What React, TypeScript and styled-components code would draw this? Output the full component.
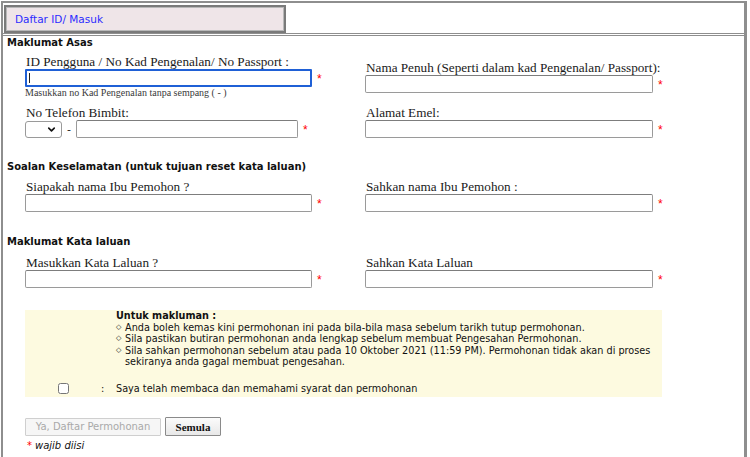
import React from 'react'
import styled, { createGlobalStyle, css } from 'styled-components'
import { ChevronDown } from 'lucide-react'

const GlobalStyle = createGlobalStyle`
  html, body {
    margin: 0;
    padding: 0;
    background: #ffffff;
  }
  body {
    font-family: 'Liberation Serif', 'Times New Roman', serif;
    color: #1a1a1a;
    overflow: hidden;
  }
`

const Frame = styled.div`
  width: 741px;
  margin-top: 1px;
  margin-left: 1px;
  border-top: 2px solid #8e8e8e;
  border-left: 2px solid #8e8e8e;
  border-right: 3px solid #8e8e8e;
  min-height: 470px;
`

const TabBar = styled.div`
  display: flex;
  padding: 2px 0 0 1px;
  border-bottom: 3px double #8e8e8e;
  height: 28px;
`

const Tab = styled.div`
  width: 269px;
  height: 24px;
  background: #efe5e8;
  border: 2px solid #7a7a7a;
  box-shadow: inset 0 0 0 1px #b8b8b8;
  display: flex;
  align-items: center;
  padding-left: 9px;
  font-family: 'DejaVu Sans', Verdana, sans-serif;
  font-size: 10.5px;
  color: #2b2bff;
`

const Content = styled.div`
  padding: 1px 0 0 4px;
`

const SectionTitle = styled.div<{ $top: number }>`
  margin-top: ${p => p.$top}px;
  font-family: 'DejaVu Sans', Verdana, sans-serif;
  font-weight: bold;
  font-size: 10px;
  line-height: 12px;
  height: 12px;
  color: #111;
`

const FieldGrid = styled.div<{ $top: number }>`
  display: grid;
  grid-template-columns: 340px 340px;
  align-items: center;
  row-gap: 6px;
  margin-top: ${p => p.$top}px;
  padding-left: 18px;
`

const Cell = styled.div`
  display: flex;
  flex-direction: column;
`

const Label = styled.label`
  font-size: 13.2px;
  line-height: 15px;
  padding-left: 1px;
  color: #1a1a1a;
  white-space: nowrap;
`

const InputRow = styled.div`
  display: flex;
  align-items: center;
`

const TextInput = styled.input<{ $width: number; $focused?: boolean }>`
  box-sizing: border-box;
  width: ${p => p.$width}px;
  height: 18px;
  margin: 0;
  padding: 0 3px;
  border: 1px solid #9a9a9a;
  border-top-color: #7d7d7d;
  border-radius: 2px;
  background: #fff;
  font-size: 13px;
  outline: none;
  ${p =>
    p.$focused &&
    css`
      border: 2px solid #1f60d6;
      border-radius: 1px;
    `}
`

const FocusWrap = styled.div`
  position: relative;
  display: flex;
`

const Caret = styled.span`
  position: absolute;
  left: 4px;
  top: 4px;
  width: 1px;
  height: 10px;
  background: #222;
`

const Required = styled.span`
  color: #f00;
  font-family: 'Liberation Sans', Arial, sans-serif;
  font-size: 12px;
  line-height: 12px;
  margin-left: 5px;
  padding-top: 2px;
`

const Hint = styled.div`
  font-size: 10px;
  line-height: 12px;
  color: #3a3a3a;
  white-space: nowrap;
`

const SelectWrap = styled.div`
  position: relative;
  display: flex;
`

const Select = styled.select`
  appearance: none;
  -webkit-appearance: none;
  box-sizing: border-box;
  width: 37px;
  height: 17px;
  margin: 0;
  border: 1px solid #9a9a9a;
  border-radius: 3px;
  background: #fff;
  font-size: 11px;
`

const SelectArrow = styled.span`
  position: absolute;
  right: 5px;
  top: 3px;
  display: flex;
  pointer-events: none;
  color: #111;
`

const Dash = styled.span`
  font-family: 'DejaVu Sans', Verdana, sans-serif;
  font-size: 11px;
  margin: 0 5px 0 5px;
`

const Notice = styled.div`
  margin: 22px 0 0 18px;
  width: 637px;
  height: 87px;
  background: #fdfae0;
  font-family: 'DejaVu Sans', Verdana, sans-serif;
  font-size: 9.7px;
  line-height: 11.5px;
  color: #111;
  display: flex;
  flex-direction: column;
`

const NoticeBody = styled.div`
  padding: 0 0 0 91px;
`

const NoticeTitle = styled.div`
  font-weight: bold;
`

const NoticeItem = styled.div`
  display: flex;
`

const Bullet = styled.span`
  width: 9px;
  flex: none;
  font-size: 7px;
`

const AgreeRow = styled.div`
  display: flex;
  align-items: center;
  margin-top: 15px;
`

const CheckCell = styled.div`
  width: 76px;
  display: flex;
  padding-left: 33px;
  box-sizing: border-box;
`

const CheckBox = styled.input`
  width: 11px;
  height: 11px;
  margin: 0;
`

const Colon = styled.span`
  width: 15px;
`

const Buttons = styled.div`
  display: flex;
  align-items: center;
  gap: 4px;
  margin: 20px 0 0 18px;
`

const Button = styled.button<{ $disabled?: boolean }>`
  box-sizing: border-box;
  height: 18px;
  margin: 0;
  padding: 0 8px;
  border-radius: 1px;
  ${p =>
    p.$disabled
      ? css`
          width: 136px;
          border: 1px solid #cfcfcf;
          background: #f6f6f6;
          color: #a9a9a9;
          font-family: 'DejaVu Sans', Verdana, sans-serif;
          font-size: 10px;
        `
      : css`
          width: 56px;
          height: 19px;
          border: 1px solid #8a8a8a;
          background: linear-gradient(#fbfbfb, #e8e8e8);
          color: #111;
          font-family: 'Liberation Serif', 'Times New Roman', serif;
          font-weight: bold;
          font-size: 11px;
        `}
`

const Footnote = styled.div`
  margin: 4px 0 0 20px;
  font-family: 'DejaVu Sans', Verdana, sans-serif;
  font-size: 10px;
  line-height: 12px;
  font-style: italic;
  color: #111;
`

const Star = styled.span`
  color: #f00;
  font-style: normal;
  margin-right: 3px;
`

type Field = {
  label: string
  width: number
  focused?: boolean
  hint?: string
  phone?: boolean
}

type Section = {
  title: string
  titleTop: number
  gridTop: number
  rows: [Field, Field][]
}

const sections: Section[] = [
  {
    title: 'Maklumat Asas',
    titleTop: 0,
    gridTop: 5,
    rows: [
      [
        {
          label: 'ID Pengguna / No Kad Pengenalan/ No Passport :',
          width: 287,
          focused: true,
          hint: 'Masukkan no Kad Pengenalan tanpa sempang ( - )',
        },
        { label: 'Nama Penuh (Seperti dalam kad Pengenalan/ Passport):', width: 288 },
      ],
      [
        { label: 'No Telefon Bimbit:', width: 222, phone: true },
        { label: 'Alamat Emel:', width: 288 },
      ],
    ],
  },
  {
    title: 'Soalan Keselamatan (untuk tujuan reset kata laluan)',
    titleTop: 23,
    gridTop: 6,
    rows: [
      [
        { label: 'Siapakah nama Ibu Pemohon ?', width: 287 },
        { label: 'Sahkan nama Ibu Pemohon :', width: 288 },
      ],
    ],
  },
  {
    title: 'Maklumat Kata laluan',
    titleTop: 24,
    gridTop: 7,
    rows: [
      [
        { label: 'Masukkan Kata Laluan ?', width: 287 },
        { label: 'Sahkan Kata Laluan', width: 288 },
      ],
    ],
  },
]

const notices = [
  'Anda boleh kemas kini permohonan ini pada bila-bila masa sebelum tarikh tutup permohonan.',
  'Sila pastikan butiran permohonan anda lengkap sebelum membuat Pengesahan Permohonan.',
  'Sila sahkan permohonan sebelum atau pada 10 Oktober 2021 (11:59 PM). Permohonan tidak akan di proses sekiranya anda gagal membuat pengesahan.',
]

function FieldCell({ field }: { field: Field }) {
  return (
    <Cell>
      <Label>{field.label}</Label>
      <InputRow>
        {field.phone && (
          <>
            <SelectWrap>
              <Select defaultValue="">
                <option value=""></option>
              </Select>
              <SelectArrow>
                <ChevronDown size={11} strokeWidth={3.5} />
              </SelectArrow>
            </SelectWrap>
            <Dash>-</Dash>
          </>
        )}
        {field.focused ? (
          <FocusWrap>
            <TextInput $width={field.width} $focused />
            <Caret />
          </FocusWrap>
        ) : (
          <TextInput $width={field.width} />
        )}
        <Required>*</Required>
      </InputRow>
      {field.hint && <Hint>{field.hint}</Hint>}
    </Cell>
  )
}

export default function App() {
  return (
    <>
      <GlobalStyle />
      <Frame>
        <TabBar>
          <Tab>Daftar ID/ Masuk</Tab>
        </TabBar>
        <Content>
          {sections.map(section => (
            <React.Fragment key={section.title}>
              <SectionTitle $top={section.titleTop}>{section.title}</SectionTitle>
              <FieldGrid $top={section.gridTop}>
                {section.rows.map(row =>
                  row.map(field => <FieldCell key={field.label} field={field} />)
                )}
              </FieldGrid>
            </React.Fragment>
          ))}

          <Notice>
            <NoticeBody>
              <NoticeTitle>Untuk makluman :</NoticeTitle>
              {notices.map(text => (
                <NoticeItem key={text}>
                  <Bullet>◇</Bullet>
                  <span>{text}</span>
                </NoticeItem>
              ))}
            </NoticeBody>
            <AgreeRow>
              <CheckCell>
                <CheckBox type="checkbox" />
              </CheckCell>
              <Colon>:</Colon>
              <span>Saya telah membaca dan memahami syarat dan permohonan</span>
            </AgreeRow>
          </Notice>

          <Buttons>
            <Button $disabled disabled>
              Ya, Daftar Permohonan
            </Button>
            <Button>Semula</Button>
          </Buttons>

          <Footnote>
            <Star>*</Star>wajib diisi
          </Footnote>
        </Content>
      </Frame>
    </>
  )
}
